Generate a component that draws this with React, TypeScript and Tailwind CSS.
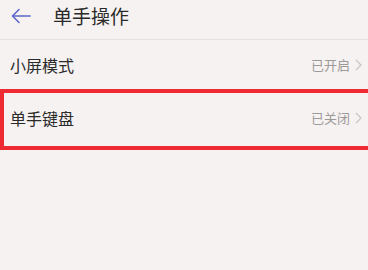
export default function App() {
  const font = { fontFamily: '"Noto Sans CJK SC", "Noto Sans", sans-serif' };
  return (
    <div className="w-[368px] h-[270px] overflow-hidden bg-[#f6f2f2] text-[#2a2a2a]" style={font}>
      {/* Header */}
      <div className="flex items-center h-[40px] border-b border-[#e6e1e1] pb-[8px]">
        <svg className="ml-[11px]" width="20" height="16" viewBox="0 0 20 16" fill="none" stroke="#5b67cc" strokeWidth="1.6" strokeLinecap="round" strokeLinejoin="round">
          <path d="M19 8H2" />
          <path d="M8 1.5L1.5 8L8 14.5" />
        </svg>
        <span className="ml-[22px] text-[19px] leading-none">单手操作</span>
      </div>

      {/* Row 1 */}
      <div className="flex items-center h-[49px] pl-[10px] pr-[6px]">
        <span className="text-[16px]">小屏模式</span>
        <span className="ml-auto text-[13px] text-[#9c9999]">已开启</span>
        <svg className="ml-[5px]" width="7" height="12" viewBox="0 0 7 12" fill="none" stroke="#c9c5c5" strokeWidth="1.2">
          <path d="M1 1l5 5-5 5" />
        </svg>
      </div>

      {/* Row 2 (highlighted) */}
      <div className="flex items-center h-[61px] mr-[-6px] border-4 border-r-0 border-[#ee2a32] pl-[6px] pr-[12px] pb-[4px]">
        <span className="text-[16px]">单手键盘</span>
        <span className="ml-auto text-[13px] text-[#9c9999]">已关闭</span>
        <svg className="ml-[5px]" width="7" height="12" viewBox="0 0 7 12" fill="none" stroke="#c9c5c5" strokeWidth="1.2">
          <path d="M1 1l5 5-5 5" />
        </svg>
      </div>
    </div>
  );
}
